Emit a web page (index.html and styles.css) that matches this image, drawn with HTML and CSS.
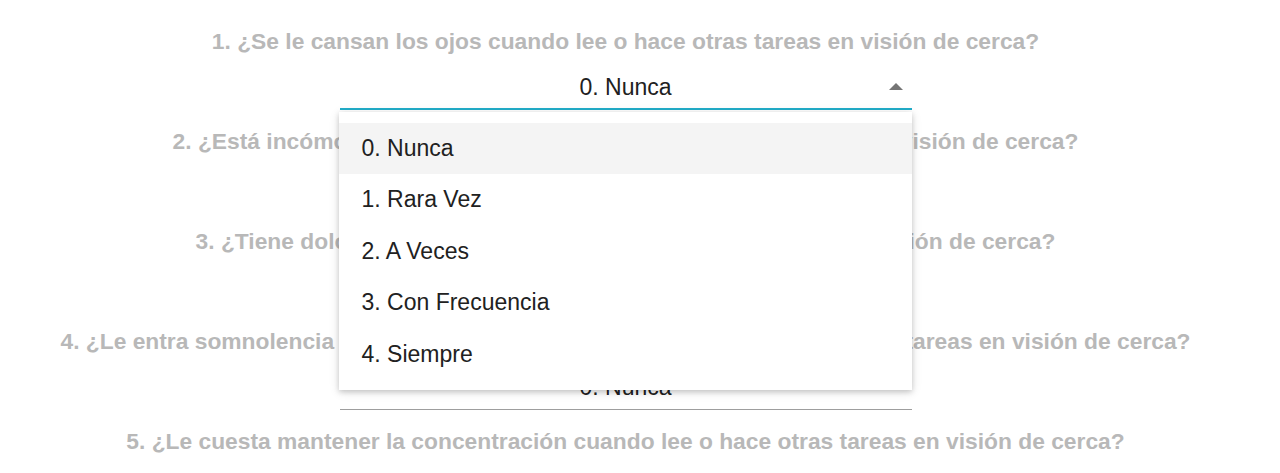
FILE: index.html
```html
<!DOCTYPE html>
<html lang="es">
<head>
    <meta charset="UTF-8">
    <meta name="viewport" content="width=device-width, initial-scale=1.0">
    <title>Cuestionario</title>
    <link rel="stylesheet" href="styles.css">
</head>
<body>
    <div class="survey">
        <div class="question">
            <p class="q-text">1. ¿Se le cansan los ojos cuando lee o hace otras tareas en visión de cerca?</p>
            <div class="select focused">
                <span class="select-value">0. Nunca</span>
                <svg class="caret" width="14" height="7" viewBox="0 0 14 7"><polygon points="0,7 7,0 14,7" fill="#757575"/></svg>
                <ul class="dropdown">
                    <li class="active">0. Nunca</li>
                    <li>1. Rara Vez</li>
                    <li>2. A Veces</li>
                    <li>3. Con Frecuencia</li>
                    <li>4. Siempre</li>
                </ul>
            </div>
        </div>
        <div class="question">
            <p class="q-text">2. ¿Está incómodo con sus ojos cuando lee o hace otras tareas en visión de cerca?</p>
            <div class="select">
                <span class="select-value">0. Nunca</span>
            </div>
        </div>
        <div class="question">
            <p class="q-text">3. ¿Tiene dolores de cabeza cuando lee o hace otras tareas en visión de cerca?</p>
            <div class="select">
                <span class="select-value">0. Nunca</span>
            </div>
        </div>
        <div class="question">
            <p class="q-text">4. ¿Le entra somnolencia o nota sensación de sueño cuando lee o hace otras tareas en visión de cerca?</p>
            <div class="select">
                <span class="select-value">0. Nunca</span>
            </div>
        </div>
        <div class="question">
            <p class="q-text">5. ¿Le cuesta mantener la concentración cuando lee o hace otras tareas en visión de cerca?</p>
        </div>
    </div>
</body>
</html>
```
FILE: styles.css
```css
body, html {
    margin: 0;
    padding: 0;
    background: #fff;
    font-family: "Liberation Sans", Arial, sans-serif;
    overflow: hidden;
}
.survey {
    width: 1251px;
    padding-top: 16px;
}
.question {
    margin-bottom: 6px;
}
.q-text {
    margin: 0;
    height: 50px;
    line-height: 50px;
    text-align: center;
    white-space: nowrap;
    font-size: 22.8px;
    font-weight: bold;
    color: #b8b8b8;
}
.select {
    position: relative;
    width: 572px;
    height: 43px;
    margin: 0 auto;
    border-bottom: 1px solid #9e9e9e;
    text-align: center;
}
.select.focused {
    height: 42px;
    border-bottom: 2px solid #22adc9;
}
.select-value {
    display: block;
    line-height: 42px;
    font-size: 23px;
    color: #212121;
}
.caret {
    position: absolute;
    right: 9px;
    top: 17px;
}
.dropdown {
    position: absolute;
    z-index: 5;
    top: 46px;
    left: -1px;
    width: 573px;
    margin: 0;
    padding: 11px 0 10px;
    list-style-type: none;
    background: #fff;
    text-align: left;
    box-shadow: 0 2px 5px rgba(0, 0, 0, 0.16), 0 2px 10px rgba(0, 0, 0, 0.12);
}
.dropdown li {
    height: 51.4px;
    line-height: 51.4px;
    padding-left: 23px;
    font-size: 23px;
    color: #212121;
}
.dropdown li.active {
    background: #f4f4f4;
}
```
